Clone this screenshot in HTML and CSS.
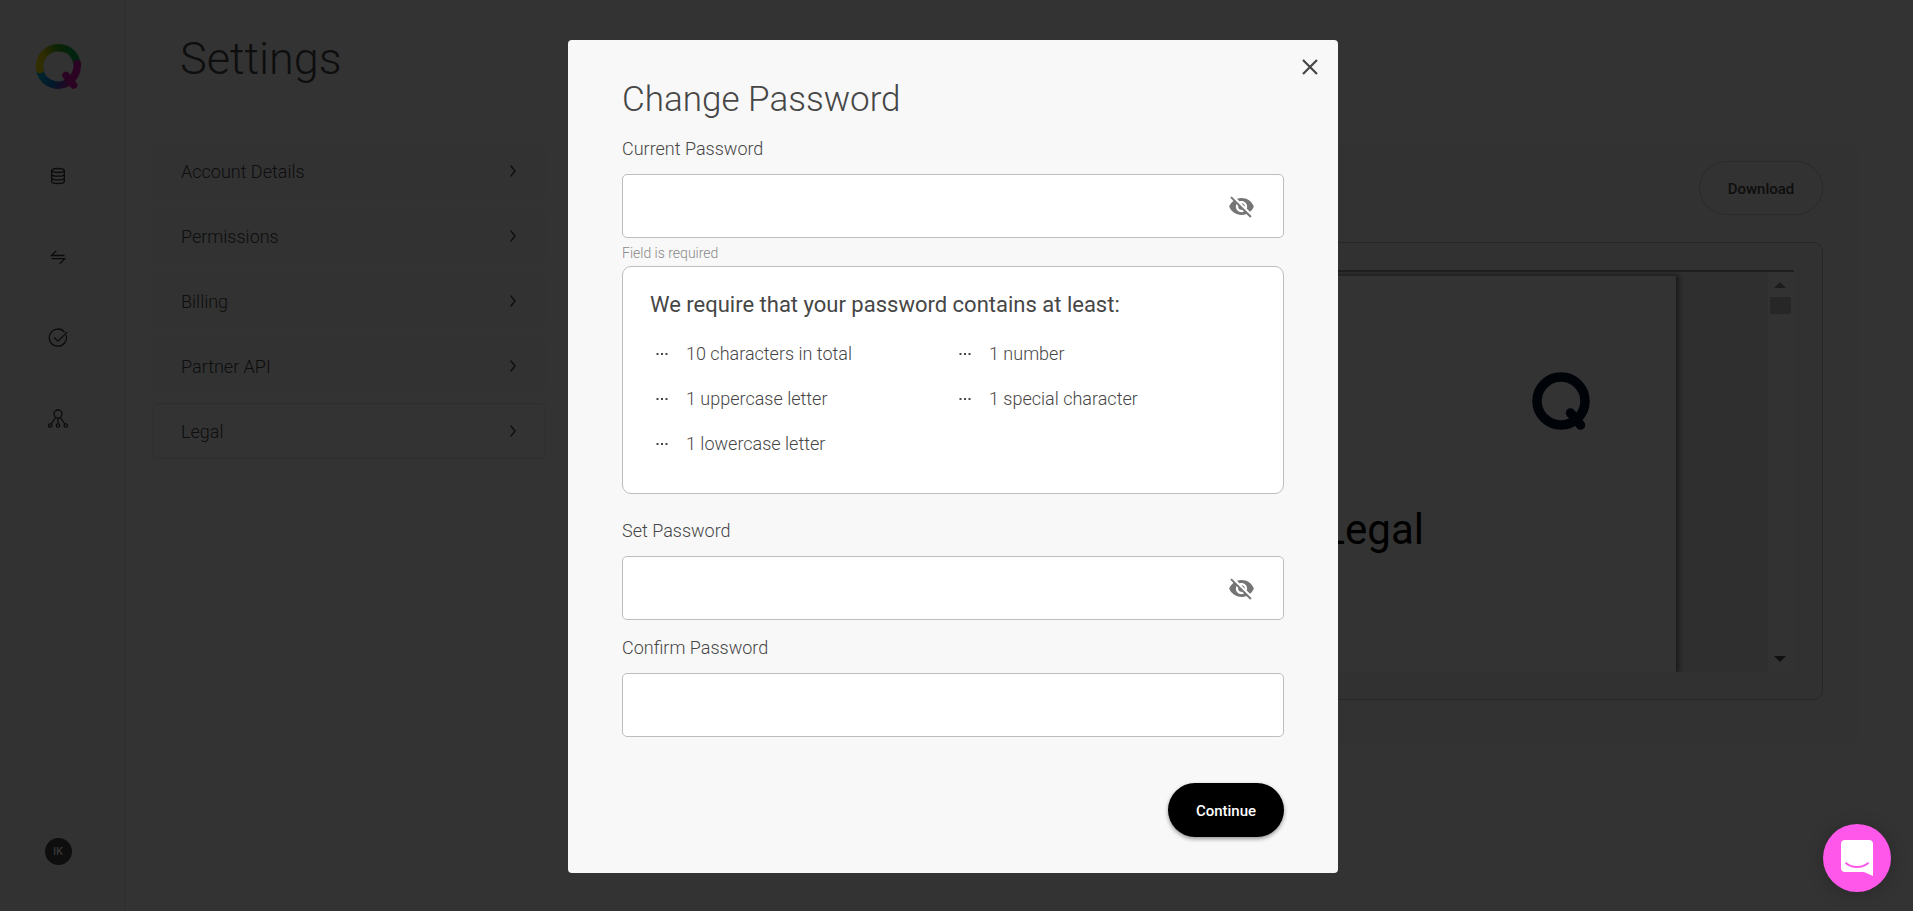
FILE: index.html
```html
<!DOCTYPE html>
<html lang="en">
<head>
<meta charset="utf-8">
<meta name="viewport" content="width=device-width, initial-scale=1">
<title>Settings</title>
<link rel="stylesheet" href="styles.css">
</head>
<body>
<svg class="sprite" aria-hidden="true">
  <symbol id="chevron" viewBox="0 0 7 12"><path d="M1 1l4 5-4 5" fill="none" stroke="currentColor" stroke-width="1.4" stroke-linecap="round" stroke-linejoin="round"/></symbol>
  <symbol id="dots" viewBox="0 0 24 24"><path d="M6.500 11h2v2h-2zM11 11h2v2h-2zM15.500 11h2v2h-2z" fill="currentColor"/></symbol>
  <symbol id="eye-off" viewBox="0 0 24 24"><path fill="currentColor" d="M12 7c2.760 0 5 2.240 5 5 0 .65-.13 1.260-.36 1.830l2.920 2.920c1.510-1.260 2.700-2.890 3.430-4.750-1.730-4.390-6-7.500-11-7.500-1.400 0-2.740.25-3.980.7l2.160 2.160C10.740 7.130 11.350 7 12 7zM2 4.270l2.280 2.280.46.46C3.080 8.300 1.780 10.020 1 12c1.730 4.390 6 7.500 11 7.500 1.550 0 3.030-.3 4.380-.84l.42.42L19.730 22 21 20.730 3.270 3 2 4.270zM7.530 9.800l1.550 1.550c-.05.21-.08.43-.08.65 0 1.660 1.340 3 3 3 .22 0 .44-.03.65-.08l1.550 1.550c-.67.33-1.410.53-2.200.53-2.760 0-5-2.240-5-5 0-.79.2-1.530.53-2.200zm4.310-.78l3.150 3.150.02-.16c0-1.660-1.340-3-3-3l-.17.01z"/></symbol>
</svg>

<div class="app">
  <nav class="sidebar" aria-label="Main">
    <a class="logo" href="#" aria-label="Home">
      <svg viewBox="0 0 45 45" width="45" height="45" fill="none" stroke-width="7.500" stroke-linecap="round">
        <defs>
          <linearGradient id="top" x1="4" y1="24" x2="41" y2="12" gradientUnits="userSpaceOnUse"><stop offset="0" stop-color="#ffe600"/><stop offset=".2" stop-color="#e6d800"/><stop offset=".6" stop-color="#3fae1e"/><stop offset="1" stop-color="#00b45a"/></linearGradient>
          <linearGradient id="low" x1="4" y1="30" x2="34" y2="40" gradientUnits="userSpaceOnUse"><stop offset="0" stop-color="#00b4e6"/><stop offset=".5" stop-color="#1478d2"/><stop offset="1" stop-color="#c814aa"/></linearGradient>
        </defs>
        <path stroke="url(#low)" d="M4 27C6 35.500 13.500 41.200 22.500 41.200c3 0 6-.8 8.500-2.200"/>
        <path stroke="url(#top)" d="M3.900 25.500C1.900 14 10.500 3.800 22.500 3.800c9 0 16 5.500 18.200 14.200"/>
        <path stroke="#d814b0" d="M41.200 19.500c.5 8-2.700 13.500-7.200 17.500M30 31.500l7.500 9.500"/>
      </svg>
    </a>
    <a class="nav-link" href="#" aria-label="Data">
      <svg viewBox="0 0 22 22" width="22" height="22"><ellipse cx="11" cy="5.500" rx="6.300" ry="2"/><path d="M4.700 5.500v11c0 1.200 2.800 2 6.300 2s6.300-.8 6.300-2v-11M4.700 9.200c0 1.200 2.800 2 6.300 2s6.300-.8 6.300-2M4.700 12.900c0 1.200 2.800 2 6.300 2s6.300-.8 6.300-2"/></svg>
    </a>
    <a class="nav-link" href="#" aria-label="Transfers">
      <svg viewBox="0 0 22 22" width="22" height="22"><path d="M17.500 9.500h-13L9.300 4.700M4.500 12.700h13.200L12.800 17.700"/></svg>
    </a>
    <a class="nav-link" href="#" aria-label="Approvals">
      <svg viewBox="0 0 22 22" width="22" height="22"><path d="M17.600 5.200a8.600 8.600 0 1 0 1.500 2.800M7 10.500l4 3.700 9.300-9.300"/></svg>
    </a>
    <a class="nav-link" href="#" aria-label="Network">
      <svg viewBox="0 0 22 22" width="22" height="22"><circle cx="11" cy="6" r="4"/><circle cx="3.200" cy="17.500" r="1.700"/><circle cx="11" cy="17.500" r="1.700"/><circle cx="18.800" cy="17.500" r="1.700"/><path d="M11 10v5.800M8.700 9.300l-4.500 6.700M13.300 9.300l4.500 6.700"/></svg>
    </a>
    <button class="avatar" type="button">IK</button>
  </nav>

  <main class="main">
    <h1 class="page-title">Settings</h1>
    <div class="columns">
      <ul class="menu">
        <li><a class="menu-item" href="#">Account Details <svg class="chevron"><use href="#chevron"/></svg></a></li>
        <li><a class="menu-item" href="#">Permissions <svg class="chevron"><use href="#chevron"/></svg></a></li>
        <li><a class="menu-item" href="#">Billing <svg class="chevron"><use href="#chevron"/></svg></a></li>
        <li><a class="menu-item" href="#">Partner API <svg class="chevron"><use href="#chevron"/></svg></a></li>
        <li><a class="menu-item menu-item-active" href="#">Legal <svg class="chevron"><use href="#chevron"/></svg></a></li>
      </ul>
      <section class="panel">
        <button class="download" type="button">Download</button>
        <div class="viewer-frame">
          <div class="viewer">
            <div class="canvas">
              <div class="sheet">
                <svg class="sheet-logo" viewBox="0 0 58 58" fill="none" stroke="#001528" stroke-linecap="round" stroke-width="9.500"><ellipse cx="29" cy="29" rx="24" ry="24"/><path d="M38.500 41l10 12"/></svg>
                <p class="sheet-title">Legal</p>
              </div>
            </div>
            <div class="scrollbar">
              <svg viewBox="0 0 12 6" width="12" height="6" fill="#8c8c8c"><path d="M0 6l6-6 6 6z"/></svg>
              <span class="thumb"></span>
              <svg viewBox="0 0 12 6" width="12" height="6" fill="#505050"><path d="M0 0h12L6 6z"/></svg>
            </div>
          </div>
        </div>
      </section>
    </div>
  </main>
</div>

<div class="overlay">
  <form class="dialog" role="dialog" aria-modal="true" aria-labelledby="dialog-title">
    <button class="close" type="button" aria-label="Close"><svg viewBox="0 0 16 16" width="16" height="16"><path d="M1 1l14 14M15 1L1 15" stroke="currentColor" stroke-width="2.200"/></svg></button>
    <h2 class="dialog-title" id="dialog-title">Change Password</h2>

    <label class="label" for="current">Current Password</label>
    <div class="field">
      <input class="input" id="current" type="password">
      <button class="reveal" type="button" aria-label="Show current password"><svg width="27" height="27"><use href="#eye-off"/></svg></button>
    </div>
    <p class="helper">Field is required</p>

    <div class="rules">
      <h3 class="rules-title">We require that your password contains at least:</h3>
      <ul class="rules-list">
        <li class="rule"><svg class="rule-icon"><use href="#dots"/></svg>10 characters in total</li>
        <li class="rule"><svg class="rule-icon"><use href="#dots"/></svg>1 number</li>
        <li class="rule"><svg class="rule-icon"><use href="#dots"/></svg>1 uppercase letter</li>
        <li class="rule"><svg class="rule-icon"><use href="#dots"/></svg>1 special character</li>
        <li class="rule"><svg class="rule-icon"><use href="#dots"/></svg>1 lowercase letter</li>
      </ul>
    </div>

    <label class="label" for="new">Set Password</label>
    <div class="field">
      <input class="input" id="new" type="password">
      <button class="reveal" type="button" aria-label="Show new password"><svg width="27" height="27"><use href="#eye-off"/></svg></button>
    </div>
    <label class="label label-spaced" for="confirm">Confirm Password</label>
    <div class="field">
      <input class="input" id="confirm" type="password">
    </div>
    <button class="continue" type="submit">Continue</button>
  </form>
</div>

<button class="launcher" type="button" aria-label="Open chat">
  <svg viewBox="0 0 32 36" width="32" height="36"><path fill="#fff" d="M4 0h24a4 4 0 0 1 4 4v32l-9-4H4a4 4 0 0 1-4-4V4a4 4 0 0 1 4-4z"/><path d="M5 23.200c6.500 5 15.500 5 22 0" fill="none" stroke="#ff57ea" stroke-width="2" stroke-linecap="round"/></svg>
</button>
</body>
</html>
```
FILE: styles.css
```css
* { box-sizing: border-box; }

body {
  margin: 0;
  color: #464646;
  background: #fff;
  font-family: Roboto, "Open Sans", sans-serif;
  font-size: 18px;
  font-weight: 300;
}

h1, h2, h3, p, ul { margin: 0; padding: 0; font-weight: 300; }
ul { list-style: none; }
button { font-family: inherit; cursor: pointer; padding: 0; border: 0; background: none; }
svg { display: block; }
.sprite { position: absolute; width: 0; height: 0; }

.app { display: flex; min-height: 100vh; }

.sidebar {
  display: flex;
  flex-direction: column;
  align-items: center;
  flex: none;
  width: 126px;
  padding: 44px 9px 46px 0;
  background: #fafafa;
  border-right: 1px solid #ececec;
}
.logo { margin-bottom: 76px; }
.nav-link { margin-bottom: 59px; }
.nav-link svg { fill: none; stroke: #333; stroke-width: 1.3; }
.avatar {
  width: 27px;
  height: 27px;
  margin-top: auto;
  border-radius: 50%;
  background: #464646;
  color: #fff;
  font-size: 11px;
  font-weight: 500;
}

.main { flex: 1; min-width: 0; padding: 32px 54px 0 27px; }
.page-title { padding-left: 27px; font-size: 45px; line-height: 54px; margin-bottom: 57px; }
.columns { display: grid; grid-template-columns: 393px 1fr; gap: 27px; align-items: start; }
.menu { display: grid; gap: 9px; }
.menu-item {
  display: flex;
  align-items: center;
  justify-content: space-between;
  height: 56px;
  padding: 0 28px 0 27px;
  border: 1px solid #f7f7f7;
  border-radius: 5px;
  background: #f7f7f7;
  color: inherit;
  text-decoration: none;
}
.menu-item-active { background: #fff; border-color: #e4e4e4; }
.chevron { width: 7px; height: 12px; }

.panel {
  display: flex;
  flex-direction: column;
  padding: 18px 36px 44px;
  background: #fafafa;
  border-radius: 9px;
}
.download {
  align-self: flex-end;
  width: 124px;
  height: 54px;
  margin-bottom: 27px;
  padding-top: 2px;
  border: 1px solid #d0d0d0;
  border-radius: 27px;
  color: #464646;
  font-size: 15px;
  font-weight: 500;
}
.viewer-frame { padding: 27px 28px; border: 1px solid #c4c4c4; border-radius: 9px; background: #f5f5f5; }
.viewer { display: flex; height: 402px; border-top: 2px solid #999; }
.canvas { display: flex; flex: 1; justify-content: center; padding: 4px 92px 0; background: #ebebeb; overflow: hidden; }
.sheet {
  display: flex;
  flex: 1;
  flex-direction: column;
  align-items: flex-end;
  background: #fff;
  box-shadow: 2px 0 5px 1px #777;
  padding: 96px 86px 0 0;
}
.sheet-logo { width: 58px; height: 58px; }
.sheet-title { margin: 74px 166px 0 0; color: #000; font-size: 42px; line-height: 52px; font-weight: 400; }
.scrollbar { display: flex; flex-direction: column; align-items: center; width: 26px; padding: 10px 2px 10px 0; background: #f8f8f8; }
.thumb { width: 21px; height: 17px; margin: 9px 0 auto; background: #c1c1c1; }

.overlay {
  position: fixed;
  inset: 0;
  display: flex;
  align-items: center;
  justify-content: center;
  padding: 2px 7px 0 0;
  background: rgba(0, 0, 0, 0.8);
}
.dialog {
  position: relative;
  display: flex;
  flex-direction: column;
  width: 770px;
  max-width: 100%;
  padding: 36px 54px;
  border-radius: 4px;
  background: #f8f8f8;
}
.close { position: absolute; top: 19px; right: 20px; color: #464646; }
.dialog-title { font-size: 35px; line-height: 48px; margin-bottom: 12px; }
.label { line-height: 26px; margin-bottom: 12px; }
.label-spaced { margin-top: 15px; }
.field { display: flex; align-items: center; height: 64px; border: 1px solid #bdbdbd; border-radius: 5px; background: #fff; }
.input { flex: 1; min-width: 0; height: 100%; padding: 0 18px; border: 0; background: none; font: inherit; outline: none; }
.reveal { margin-right: 28px; color: #757575; }
.helper { margin: 6px 0 4px; color: #888; font-size: 14px; line-height: 18px; }
.rules { padding: 20px 27px 27px; margin-bottom: 24px; border: 1px solid #bdbdbd; border-radius: 9px; background: #fff; }
.rules-title { font-size: 22px; font-weight: 400; line-height: 36px; margin-bottom: 8px; }
.rules-list { display: grid; grid-template-columns: 1fr 1fr; }
.rule { display: flex; align-items: center; gap: 12px; height: 45px; }
.rule-icon { width: 24px; height: 24px; }
.continue {
  align-self: flex-end;
  width: 116px;
  height: 54px;
  margin-top: 46px;
  padding-top: 2px;
  border-radius: 27px;
  background: #000;
  color: #fff;
  font-size: 15px;
  font-weight: 500;
  box-shadow: 0 2px 4px rgba(0, 0, 0, 0.4);
}

.launcher {
  position: fixed;
  right: 22px;
  bottom: 19px;
  display: grid;
  place-items: center;
  width: 68px;
  height: 68px;
  border-radius: 50%;
  background: #ff57ea;
  box-shadow: 0 2px 18px rgba(0, 0, 0, 0.2);
}
```
